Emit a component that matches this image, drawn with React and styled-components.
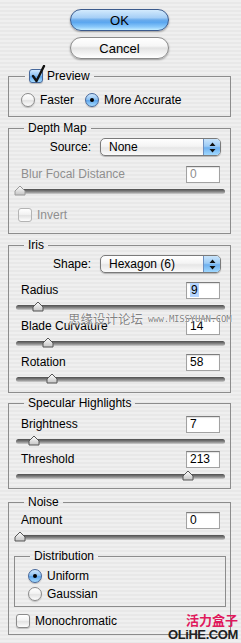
import React from 'react'
import styled, { createGlobalStyle } from 'styled-components'

const GlobalStyle = createGlobalStyle`
    body {
        margin: 0;
        background: repeating-linear-gradient(to bottom, #efefef 0, #efefef 2px, #e8e8e8 2px, #e8e8e8 4px);
        font-family: "Liberation Sans", Arial, sans-serif;
        font-size: 12px;
        color: #000;
    }
`

const Dialog = styled.div`
    position: relative;
    width: 241px;
    height: 643px;
    overflow: hidden;
    box-sizing: border-box;
    padding: 9px 10px 0 8px;
    display: flex;
    flex-direction: column;
`

const Buttons = styled.div`
    display: flex;
    flex-direction: column;
    align-items: center;
    gap: 6px;
`

const Button = styled.button`
    width: 99px;
    height: 22px;
    padding: 0;
    border-radius: 11px;
    border: 1px solid ${props => props.$primary ? '#3b5a8c' : '#8a8a8a'};
    background: ${props => props.$primary
        ? 'linear-gradient(to bottom, #d3eafd 0%, #a6cff6 38%, #6aabec 50%, #5ba7ef 62%, #8ccafb 85%, #c4eeff 100%)'
        : 'linear-gradient(to bottom, #ffffff 0%, #f6f6f6 40%, #e2e2e2 50%, #ececec 65%, #fafafa 90%, #ffffff 100%)'};
    box-shadow: 0 1px 2px rgba(0, 0, 0, 0.35);
    font-family: "Liberation Sans", Arial, sans-serif;
    font-size: 13px;
    color: #000;
`

const Group = styled.fieldset`
    margin: ${props => props.$top}px ${props => props.$right || 0}px 0 ${props => props.$left || 0}px;
    padding: 0 10px ${props => props.$bottom}px ${props => props.$padLeft || 12}px;
    border: 1px solid #8c8c8c;
    min-width: 0;
    display: flex;
    flex-direction: column;
`

const Legend = styled.legend`
    margin-left: ${props => props.$offset || 3}px;
    padding: 0 4px;
    height: 14px;
    line-height: 14px;
    display: flex;
    align-items: center;
    gap: 4px;
`

const Row = styled.div`
    margin-top: ${props => props.$top || 0}px;
    margin-left: ${props => props.$left || 0}px;
    height: ${props => props.$height || 18}px;
    display: flex;
    align-items: center;
    justify-content: ${props => props.$justify || 'flex-start'};
    gap: ${props => props.$gap || 0}px;
`

const Label = styled.span`
    color: ${props => props.$disabled ? '#8e8e8e' : '#000'};
    white-space: nowrap;
`

const Option = styled.label`
    display: flex;
    align-items: center;
    gap: 5px;
    color: ${props => props.$disabled ? '#8e8e8e' : '#000'};
`

const Field = styled.div`
    width: 34px;
    height: 17px;
    box-sizing: border-box;
    padding: 0 0 0 3px;
    background: #fff;
    border: 1px solid #a2a2a2;
    border-top-color: #7c7c7c;
    box-shadow: inset 0 1px 1px rgba(0, 0, 0, 0.12);
    display: flex;
    align-items: center;
    color: ${props => props.$disabled ? '#8e8e8e' : '#000'};
`

const Selected = styled.span`
    background: #b5d5ff;
    padding: 0 1px;
`

const SelectBox = styled.div`
    width: 121px;
    height: 18px;
    margin-right: -1px;
    box-sizing: border-box;
    border: 1px solid #7a7a7a;
    border-radius: 5px;
    background: linear-gradient(to bottom, #ffffff 0%, #f4f4f4 45%, #e6e6e6 55%, #fbfbfb 100%);
    box-shadow: 0 1px 1px rgba(0, 0, 0, 0.25);
    display: flex;
    overflow: hidden;
`

const SelectText = styled.span`
    flex: 1;
    padding-left: 8px;
    line-height: 16px;
`

const SelectArrow = styled.span`
    width: 16px;
    border-left: 1px solid #6d8fbf;
    background: linear-gradient(to bottom, #c9e4fb 0%, #9ccbf5 45%, #6eb0ef 55%, #9fd8ff 100%);
    display: flex;
    align-items: center;
    justify-content: center;
`

const SliderWrap = styled.div`
    position: relative;
    margin: ${props => props.$top || 2}px -5px 0;
    height: 12px;
`

const Track = styled.div`
    position: absolute;
    left: 0;
    right: 0;
    top: 4px;
    height: 5px;
    border-radius: 3px;
    background: linear-gradient(to bottom, #4e4e4e 0%, #767676 40%, #a4a4a4 75%, #d2d2d2 100%);
`

const Thumb = styled.svg`
    position: absolute;
    top: 0;
    margin-left: -6px;
`

const Box = styled.span`
    position: relative;
    width: 14px;
    height: 14px;
    box-sizing: border-box;
    flex-shrink: 0;
    border-radius: ${props => props.$round ? '50%' : '3px'};
    border: 1px solid ${props => props.$disabled ? '#b4b4b4' : props.$on ? '#45679b' : '#8a8a8a'};
    background: ${props => props.$on
        ? 'linear-gradient(to bottom, #cfe7fd 0%, #8fc2f2 45%, #5fa6ec 55%, #a6dcff 100%)'
        : 'linear-gradient(to bottom, #ffffff 0%, #f2f2f2 45%, #e3e3e3 55%, #fdfdfd 100%)'};
    box-shadow: ${props => props.$disabled ? 'none' : '0 1px 1px rgba(0, 0, 0, 0.2)'};
    display: flex;
    align-items: center;
    justify-content: center;
`

const Dot = styled.span`
    width: 4px;
    height: 4px;
    border-radius: 50%;
    background: #000;
`

const Check = styled.svg`
    position: absolute;
    left: 0;
    top: -5px;
`

const Watermark = styled.div`
    position: absolute;
    left: 68px;
    top: 311px;
    display: flex;
    align-items: center;
    gap: 5px;
    color: rgba(95, 95, 95, 0.8);
    text-shadow: 0 0 1px #fff, 0 0 1px #fff;
    pointer-events: none;
`

const WatermarkCjk = styled.span`
    font-family: "Noto Sans CJK SC", sans-serif;
    font-size: 12.5px;
    line-height: 16px;
`

const WatermarkUrl = styled.span`
    font-family: "DejaVu Sans Mono", monospace;
    font-size: 9px;
    letter-spacing: -0.2px;
    line-height: 16px;
`

const Brand = styled.div`
    position: absolute;
    right: 3px;
    top: 611px;
    display: flex;
    flex-direction: column;
    align-items: flex-end;
`

const BrandCjk = styled.span`
    font-family: "Noto Sans CJK SC", sans-serif;
    font-weight: bold;
    font-size: 13px;
    line-height: 17px;
    height: 17px;
    color: #e0195c;
`

const BrandUrl = styled.span`
    font-weight: bold;
    font-size: 13px;
    line-height: 14px;
    height: 14px;
    color: #222;
    letter-spacing: -0.4px;
`

const Checkbox = ({ on, disabled }) => (
    <Box $on={on} $disabled={disabled}>
        {on && (
            <Check width="16" height="19" viewBox="0 0 16 19">
                <path d="M3 11 L6.5 16 L14 1" fill="none" stroke="#111" strokeWidth="2.4" strokeLinecap="round" strokeLinejoin="round" />
            </Check>
        )}
    </Box>
)

const Radio = ({ on }) => (
    <Box $round $on={on}>{on && <Dot />}</Box>
)

const Slider = ({ value, max, disabled, top }) => (
    <SliderWrap $top={top}>
        <Track />
        <Thumb width="12" height="11" viewBox="0 0 12 11" style={{ left: `${4 + (value / max) * 201}px` }}>
            <defs>
                <linearGradient id="thumbFill" x1="0" y1="0" x2="0" y2="1">
                    <stop offset="0" stopColor="#ffffff" />
                    <stop offset="1" stopColor="#c4c4c4" />
                </linearGradient>
            </defs>
            <path d="M1 10 L1 6 L6 1 L11 6 L11 10 Z" fill="url(#thumbFill)" stroke={disabled ? '#9a9a9a' : '#555'} strokeWidth="1" strokeLinejoin="round" />
        </Thumb>
    </SliderWrap>
)

const ValueRow = ({ label, value, top, disabled, selected }) => (
    <Row $top={top} $justify="space-between">
        <Label $disabled={disabled}>{label}</Label>
        <Field $disabled={disabled}>{selected ? <Selected>{value}</Selected> : value}</Field>
    </Row>
)

const Select = ({ label, value, top }) => (
    <Row $top={top} $justify="flex-end" $gap={9}>
        <Label>{label}</Label>
        <SelectBox>
            <SelectText>{value}</SelectText>
            <SelectArrow>
                <svg width="7" height="11" viewBox="0 0 7 11">
                    <path d="M3.5 0.5 L6.5 4 L0.5 4 Z M3.5 10.5 L6.5 7 L0.5 7 Z" fill="#111" />
                </svg>
            </SelectArrow>
        </SelectBox>
    </Row>
)

const App = () => (
    <Dialog>
        <GlobalStyle />
        <Buttons>
            <Button $primary>OK</Button>
            <Button>Cancel</Button>
        </Buttons>

        <Group $top={10} $bottom={8}>
            <Legend $offset={4}><Checkbox on /><span>Preview</span></Legend>
            <Row $top={9} $height={16} $gap={11}>
                <Option><Radio />Faster</Option>
                <Option><Radio on />More Accurate</Option>
            </Row>
        </Group>

        <Group $top={4} $bottom={10}>
            <Legend>Depth Map</Legend>
            <Select label="Source:" value="None" top={3} />
            <ValueRow label="Blur Focal Distance" value="0" top={9} disabled />
            <Slider value={0} max={100} disabled />
            <Row $top={10} $height={16} $left={-3}>
                <Option $disabled><Checkbox disabled />Invert</Option>
            </Row>
        </Group>

        <Group $top={4} $bottom={7}>
            <Legend>Iris</Legend>
            <Select label="Shape:" value="Hexagon (6)" top={3} />
            <ValueRow label="Radius" value="9" top={8} selected />
            <Slider value={9} max={100} />
            <ValueRow label="Blade Curvature" value="14" top={4} />
            <Slider value={14} max={100} />
            <ValueRow label="Rotation" value="58" top={4} />
            <Slider value={58} max={360} />
        </Group>

        <Group $top={3} $bottom={6}>
            <Legend>Specular Highlights</Legend>
            <ValueRow label="Brightness" value="7" top={5} />
            <Slider value={7} max={100} />
            <ValueRow label="Threshold" value="213" top={3} />
            <Slider value={213} max={255} />
        </Group>

        <Group $top={6} $bottom={5}>
            <Legend>Noise</Legend>
            <ValueRow label="Amount" value="0" top={2} />
            <Slider value={0} max={100} />
            <Group $top={6} $bottom={4} $left={-7} $right={-6} $padLeft={13}>
                <Legend $offset={2}>Distribution</Legend>
                <Row $top={5} $height={16}>
                    <Option><Radio on />Uniform</Option>
                </Row>
                <Row $top={2} $height={16}>
                    <Option><Radio />Gaussian</Option>
                </Row>
            </Group>
            <Row $top={6} $height={16} $left={-5}>
                <Option><Checkbox />Monochromatic</Option>
            </Row>
        </Group>

        <Watermark>
            <WatermarkCjk>思缘设计论坛</WatermarkCjk>
            <WatermarkUrl>www.MISSYUAN.COM</WatermarkUrl>
        </Watermark>
        <Brand>
            <BrandCjk>活力盒子</BrandCjk>
            <BrandUrl>OLiHE.COM</BrandUrl>
        </Brand>
    </Dialog>
)

export default App
